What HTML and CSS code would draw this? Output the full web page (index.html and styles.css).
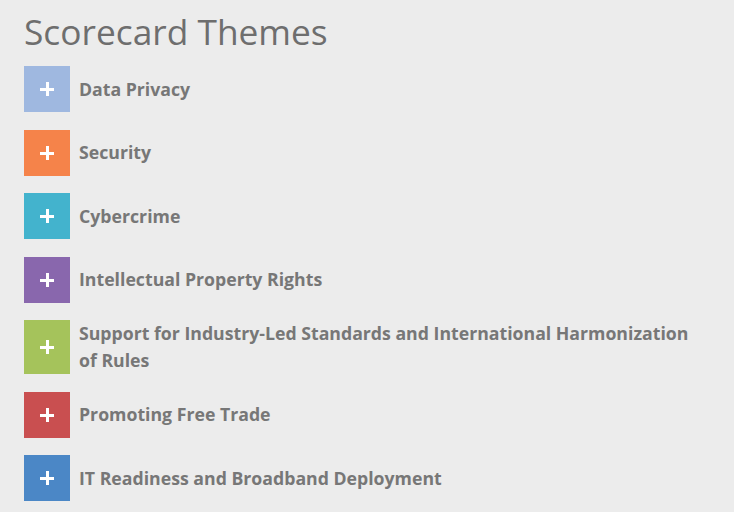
FILE: index.html
```html
<!DOCTYPE html>
<html lang="en">
<head>
    <meta charset="UTF-8">
    <meta name="viewport" content="width=device-width, initial-scale=1.0">
    <title>Scorecard Themes</title>
    <link rel="stylesheet" href="styles.css">
</head>
<body>
    <div class="themes">
        <h1>Scorecard Themes</h1>
        <ul class="theme-list">
            <li class="theme"><span class="toggle privacy"></span><span class="label">Data Privacy</span></li>
            <li class="theme"><span class="toggle security"></span><span class="label">Security</span></li>
            <li class="theme"><span class="toggle cybercrime"></span><span class="label">Cybercrime</span></li>
            <li class="theme"><span class="toggle ipr"></span><span class="label">Intellectual Property Rights</span></li>
            <li class="theme"><span class="toggle standards"></span><span class="label">Support for Industry-Led Standards and International Harmonization of Rules</span></li>
            <li class="theme"><span class="toggle trade"></span><span class="label">Promoting Free Trade</span></li>
            <li class="theme"><span class="toggle broadband"></span><span class="label">IT Readiness and Broadband Deployment</span></li>
        </ul>
    </div>
</body>
</html>
```

FILE: styles.css
```css
body {
    font-family: "Open Sans", Arial, sans-serif;
    margin: 0;
    padding: 0;
    background-color: #ececec;
}
.themes {
    padding: 7px 24px 0 24px;
    width: 680px;
}
h1 {
    margin: 0 0 11px 0;
    font-size: 35.3px;
    font-weight: 400;
    line-height: 48px;
    color: #6e6e6e;
}
.theme-list {
    list-style: none;
    margin: 0;
    padding: 0;
}
.theme {
    display: flex;
    margin-bottom: 17.5px;
}
.toggle {
    flex: 0 0 46px;
    min-height: 46px;
    position: relative;
    cursor: pointer;
}
/* plus sign */
.toggle::before, .toggle::after {
    content: "";
    position: absolute;
    left: 50%;
    top: 50%;
    background: #fff;
}
.toggle::before {
    width: 14px;
    height: 3px;
    margin: -1px 0 0 -7px;
}
.toggle::after {
    width: 3px;
    height: 14px;
    margin: -7px 0 0 -1px;
}
.label {
    align-self: center;
    margin-left: 9px;
    font-size: 17.7px;
    font-weight: 700;
    line-height: 27px;
    color: #777;
}
.privacy { background-color: #9fb8e0; }
.security { background-color: #f5834a; }
.cybercrime { background-color: #43b3cd; }
.ipr { background-color: #8967ad; }
.standards { background-color: #a5c35b; }
.trade { background-color: #c94f50; }
.broadband { background-color: #4b87c6; }
```
